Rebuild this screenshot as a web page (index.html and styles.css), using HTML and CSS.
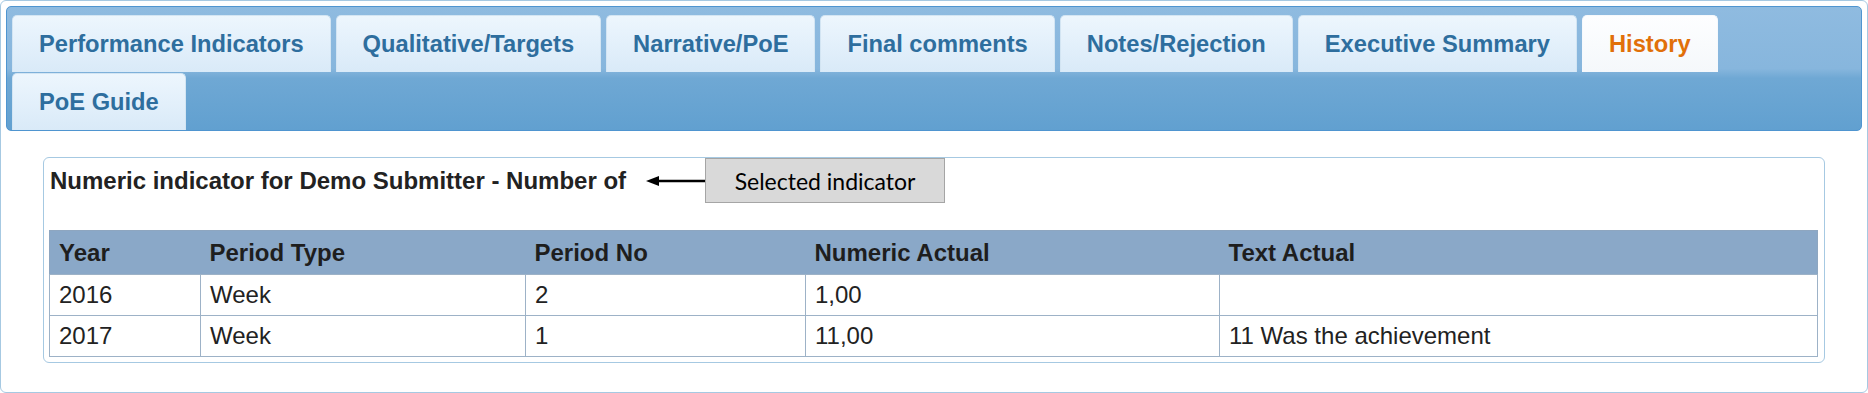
FILE: index.html
```html
<!DOCTYPE html>
<html lang="en">

<head>
	<meta charset="UTF-8">
	<title>History</title>
	<link rel="stylesheet" href="styles.css">
</head>

<body>
	<div class="tabs">
		<ul class="tab-bar">
			<li class="tab"><a href="#">Performance Indicators</a></li>
			<li class="tab"><a href="#">Qualitative/Targets</a></li>
			<li class="tab"><a href="#">Narrative/PoE</a></li>
			<li class="tab"><a href="#">Final comments</a></li>
			<li class="tab"><a href="#">Notes/Rejection</a></li>
			<li class="tab"><a href="#">Executive Summary</a></li>
			<li class="tab active"><a href="#">History</a></li>
			<li class="tab"><a href="#">PoE Guide</a></li>
		</ul>
		<div class="tab-panel">
			<div class="history-box">
				<div class="history-title">
					<h3>Numeric indicator for Demo Submitter - Number of</h3>
					<svg class="arrow" width="59" height="12" viewBox="0 0 59 12">
						<polygon points="0,6 13,1 13,11" fill="#000" />
						<line x1="10" y1="6" x2="59" y2="6" stroke="#000" stroke-width="2.5" />
					</svg>
					<span class="callout">Selected indicator</span>
				</div>
				<table class="history-table">
					<colgroup>
						<col class="col-year">
						<col class="col-type">
						<col class="col-no">
						<col class="col-numeric">
						<col>
					</colgroup>
					<thead>
						<tr>
							<th>Year</th>
							<th>Period Type</th>
							<th>Period No</th>
							<th>Numeric Actual</th>
							<th>Text Actual</th>
						</tr>
					</thead>
					<tbody>
						<tr>
							<td>2016</td>
							<td>Week</td>
							<td>2</td>
							<td>1,00</td>
							<td></td>
						</tr>
						<tr>
							<td>2017</td>
							<td>Week</td>
							<td>1</td>
							<td>11,00</td>
							<td>11 Was the achievement</td>
						</tr>
					</tbody>
				</table>
			</div>
		</div>
	</div>
</body>

</html>
```

FILE: styles.css
```css
body {
	margin: 0;
	font-family: "Liberation Sans", Arial, sans-serif;
	background: #fff;
}

.tabs {
	height: 393px;
	box-sizing: border-box;
	padding: 5px;
	border: 1px solid #a6c9e2;
	border-radius: 6px;
	background: #fff;
}

.tab-bar {
	display: flex;
	flex-wrap: wrap;
	gap: 1px 5px;
	margin: 0;
	padding: 8px 5px 0 5px;
	list-style: none;
	border: 1px solid #4f95d0;
	border-radius: 5px;
	background: linear-gradient(to bottom, #8fbbe0 0%, #87b6dd 50%, #6fa8d4 58%, #61a0d0 100%);
}

.tab a {
	display: flex;
	align-items: center;
	height: 57px;
	box-sizing: border-box;
	padding: 0 26px;
	border: 1px solid #d3e5f3;
	border-bottom: none;
	border-radius: 5px 5px 0 0;
	background: linear-gradient(to bottom, #edf6fd 0%, #e3f0fb 50%, #d9eaf8 100%);
	color: #2e6e9e;
	font-size: 23.7px;
	font-weight: bold;
	text-decoration: none;
}

.tab.active a {
	border-color: #f6f9fc;
	background: linear-gradient(to bottom, #fdfeff 0%, #f5f8fb 100%);
	color: #e17009;
}

.tab-panel {
	padding: 26px 37px 0;
}

.history-box {
	padding: 0 6px 5px 5px;
	border: 1px solid #a6c9e2;
	border-radius: 6px;
}

.history-title {
	display: flex;
	align-items: center;
	height: 45px;
	margin-bottom: 27px;
}

.history-title h3 {
	margin: 0 20px 0 1px;
	font-size: 24px;
	line-height: 28px;
	color: #222;
}

.arrow {
	display: block;
}

.callout {
	display: flex;
	align-items: center;
	justify-content: center;
	width: 240px;
	height: 45px;
	box-sizing: border-box;
	border: 1px solid #a5a5a5;
	background: #d9d9d9;
	font-family: Lato, "Open Sans", sans-serif;
	font-size: 23px;
	color: #000;
}

.history-table {
	width: 100%;
	border-collapse: collapse;
	table-layout: fixed;
	border: 1px solid #8ea6c0;
	font-size: 24px;
	color: #222;
}

.col-year {
	width: 151px;
}

.col-type {
	width: 325px;
}

.col-no {
	width: 280px;
}

.col-numeric {
	width: 414px;
}

.history-table th {
	padding: 8px 9px 7px;
	line-height: 28px;
	background: #8aa8c8;
	text-align: left;
	font-weight: bold;
	color: #1e1e1e;
}

.history-table td {
	padding: 6px 9px;
	line-height: 28px;
	border: 1px solid #9db2c7;
	white-space: nowrap;
}
```
